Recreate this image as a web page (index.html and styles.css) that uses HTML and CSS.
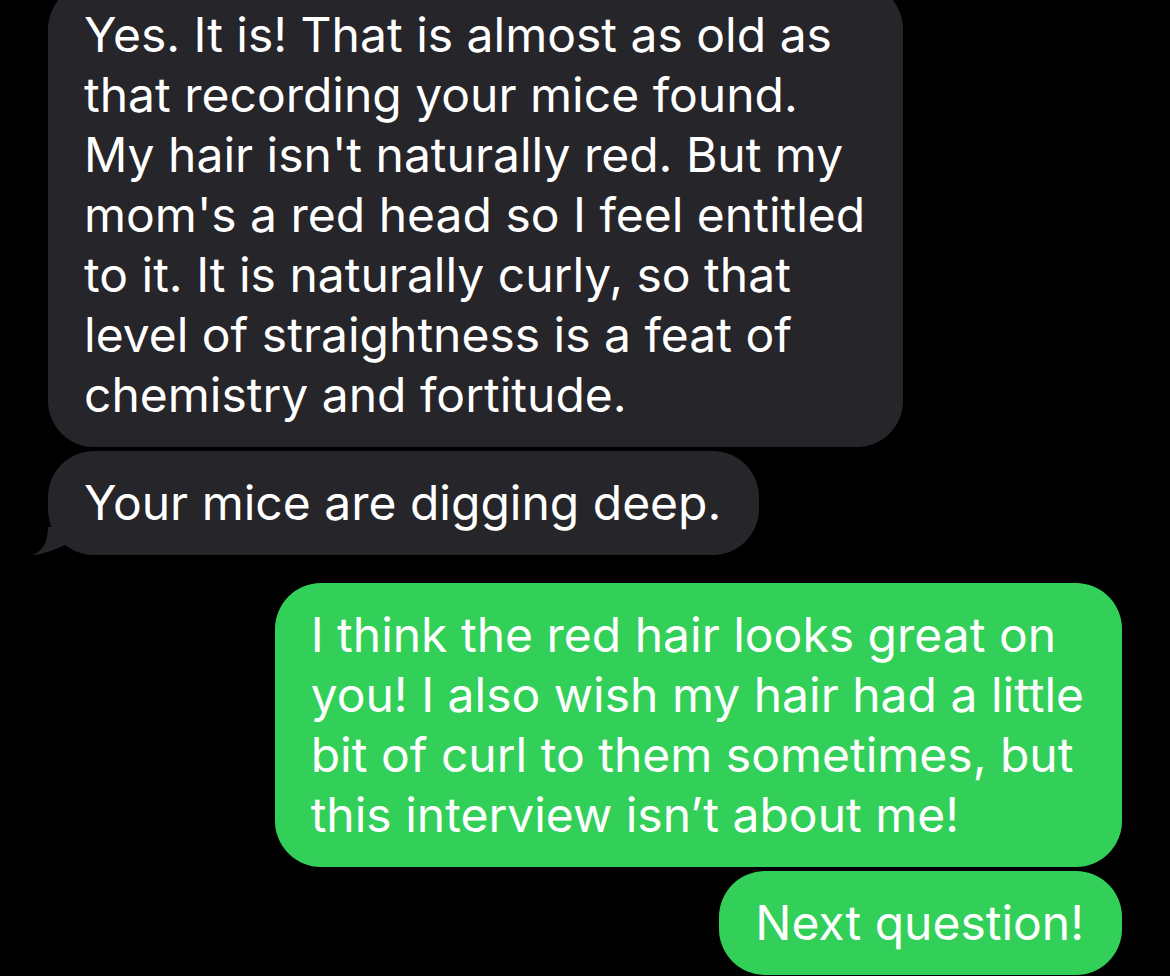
FILE: index.html
```html
<!DOCTYPE html>
<html lang="en">
<head>
<meta charset="utf-8">
<title>Messages</title>
<link rel="stylesheet" href="styles.css">
</head>
<body>
<main class="thread">
  <div class="bubble in">Yes. It is! That is almost as old as<br>that recording your mice found.<br>My hair isn't naturally red. But my<br>mom's a red head so I feel entitled<br>to it. It is naturally curly, so that<br>level of straightness is a feat of<br>chemistry and fortitude.</div>
  <div class="bubble in">Your mice are digging deep.<svg class="tail-in" width="60" height="40" viewBox="0 0 60 40"><path d="M20 12 C20 28 14 37 4 40 C15 40 28 34 39 29 L46 10 Z" fill="#262529"/></svg></div>
  <div class="bubble out first-out">I think the red hair looks great on<br>you! I also wish my hair had a little<br>bit of curl to them sometimes, but<br>this interview isn’t about me!</div>
  <div class="bubble out">Next question!</div>
</main>
</body>
</html>
```
FILE: styles.css
```css
html, body {
  margin: 0;
  padding: 0;
  background: #000;
}
body {
  width: 1170px;
  height: 976px;
  overflow: hidden;
  font-family: Inter, "Liberation Sans", Arial, sans-serif;
}
.thread {
  display: flex;
  flex-direction: column;
  gap: 4px;
  padding: 0 48px;
  margin-top: -17px;
}
.bubble {
  position: relative;
  box-sizing: border-box;
  width: fit-content;
  white-space: nowrap;
  font-size: 48px;
  line-height: 60px;
  color: #fff;
  padding: 22px 38px 22px 36px;
  border-radius: 46px;
}
.in {
  background: #262529;
  align-self: flex-start;
}
.out {
  background: #33d059;
  align-self: flex-end;
}
.first-out {
  margin-top: 24px;
}
.tail-in {
  position: absolute;
  left: -20px;
  bottom: 0;
  display: block;
}
```
